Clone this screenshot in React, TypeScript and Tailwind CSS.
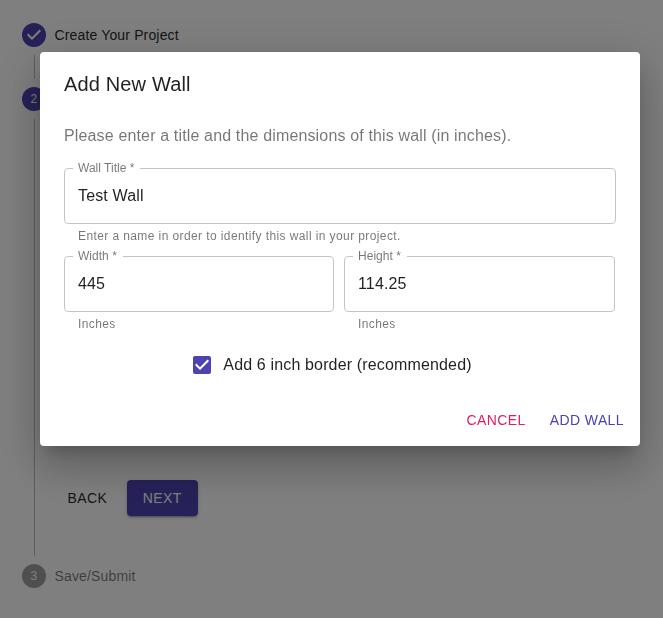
import type { ReactNode } from "react";

function StepCircle({ label, active }: { label: string; active?: boolean }) {
  return (
    <span
      className={`flex size-6 shrink-0 items-center justify-center rounded-full text-[12px] leading-[12px] text-white ${
        active ? "bg-[#4c43b1]" : "bg-[#9e9e9e]"
      }`}
    >
      {label}
    </span>
  );
}

function StepRow({ icon, children, className = "" }: { icon: ReactNode; children?: ReactNode; className?: string }) {
  return (
    <div className={`flex h-6 items-center gap-2 text-[14px] leading-5 tracking-[0.15px] ${className}`}>
      {icon}
      <span className="ml-[0.5px]">{children}</span>
    </div>
  );
}

function OutlinedField({
  label,
  value,
  helper,
  className = "",
}: {
  label: string;
  value: string;
  helper: string;
  className?: string;
}) {
  return (
    <div className={className}>
      <fieldset className="h-[61px] rounded-[4px] border border-[#c4c4c4] pl-2">
        <legend className="h-[11px] pr-[6px] pl-[5px] text-[12px] leading-[11px] tracking-[0.02px] text-black/54">
          {label}
        </legend>
        <input
          className="block h-[44px] w-full bg-transparent pl-[5px] text-[16px] tracking-[0.15px] text-black/87 outline-none"
          defaultValue={value}
        />
      </fieldset>
      <p className="mt-[3px] ml-[14px] h-5 text-[12px] leading-[19px] tracking-[0.4px] text-black/54">{helper}</p>
    </div>
  );
}

export default function App() {
  return (
    <div className="h-[618px] w-full overflow-hidden bg-white font-['Liberation_Sans',Arial,sans-serif] text-black/87">
      <main className="flex flex-col pt-[23px] pl-[22px]">
        <StepRow
          icon={
            <svg className="size-6 fill-[#4c43b1]" viewBox="0 0 24 24">
              <path d="M12 0a12 12 0 1 0 0 24 12 12 0 0 0 0-24zm-2 17l-5-5 1.4-1.4 3.6 3.6 7.6-7.6L19 8l-9 9z" />
            </svg>
          }
        >
          Create Your Project
        </StepRow>
        <div className="mt-2 ml-3 h-6 w-px bg-[#bdbdbd]" />
        <StepRow className="mt-2" icon={<StepCircle label="2" active />} />
        <div className="mt-2 ml-3 flex h-[437px] items-end border-l border-[#bdbdbd] pb-10 text-[14px] tracking-[0.4px]">
          <button className="ml-[24.5px] h-9 px-2 uppercase">Back</button>
          <button className="ml-[11.5px] h-9 w-[71px] rounded-[4px] bg-[#4c43b1] text-white uppercase shadow-[0_3px_1px_-2px_rgba(0,0,0,0.2),0_2px_2px_0_rgba(0,0,0,0.14),0_1px_5px_0_rgba(0,0,0,0.12)]">
            Next
          </button>
        </div>
        <StepRow className="mt-2 text-black/54" icon={<StepCircle label="3" />}>
          Save/Submit
        </StepRow>
      </main>

      <div className="fixed inset-0 overflow-hidden bg-black/50 pt-[52px] pl-10">
        <section
          role="dialog"
          className="flex h-[394px] w-[600px] flex-col rounded-[4px] bg-white shadow-[0_11px_15px_-7px_rgba(0,0,0,0.2),0_24px_38px_3px_rgba(0,0,0,0.14),0_9px_46px_8px_rgba(0,0,0,0.12)]"
        >
          <h2 className="px-6 py-4 text-[20px] leading-8 tracking-[0.15px]">Add New Wall</h2>
          <div className="flex flex-col px-6 pt-2">
            <p className="text-[16px] leading-6 tracking-[0.15px] text-black/54">
              Please enter a title and the dimensions of this wall (in inches).
            </p>
            <OutlinedField
              className="mt-[15px]"
              label="Wall Title *"
              value="Test Wall"
              helper="Enter a name in order to identify this wall in your project."
            />
            <div className="mt-1 flex gap-[10px]">
              <OutlinedField className="w-[270px]" label="Width *" value="445" helper="Inches" />
              <OutlinedField className="w-[271px]" label="Height *" value="114.25" helper="Inches" />
            </div>
            <label className="mt-[18px] mr-[18px] flex items-center justify-center gap-[9px] text-[16px] leading-6 tracking-[0.15px]">
              <svg className="size-6 fill-[#4c43b1]" viewBox="0 0 24 24">
                <path d="M19 3H5c-1.11 0-2 .9-2 2v14c0 1.1.89 2 2 2h14c1.11 0 2-.9 2-2V5c0-1.1-.89-2-2-2zm-9 14l-5-5 1.41-1.41L10 14.17l7.59-7.59L19 8l-9 9z" />
              </svg>
              Add 6 inch border (recommended)
            </label>
          </div>
          <div className="mt-auto flex h-[52px] justify-end gap-2 p-2 text-[14px] tracking-[0.4px]">
            <button className="h-9 px-2 text-[#dc1f61] uppercase">Cancel</button>
            <button className="h-9 px-2 text-[#4c43b1] uppercase">Add Wall</button>
          </div>
        </section>
      </div>
    </div>
  );
}
